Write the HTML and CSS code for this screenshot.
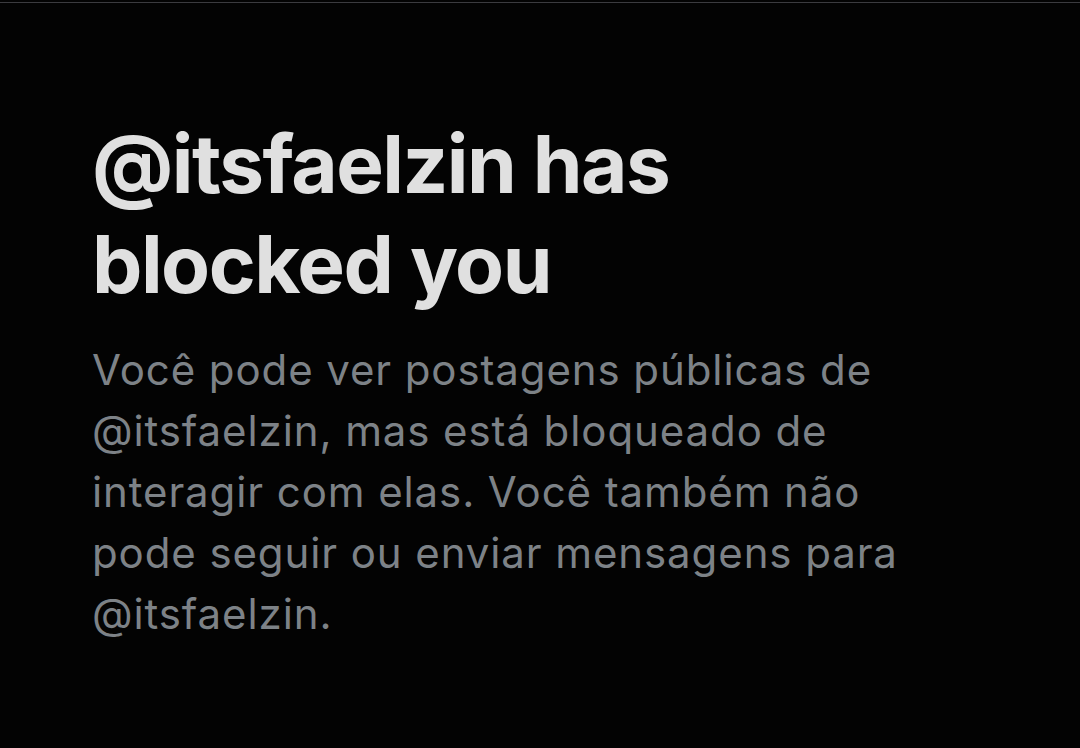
FILE: index.html
```html
<!DOCTYPE html>
<html lang="pt">
<head>
<meta charset="utf-8">
<link rel="stylesheet" href="styles.css">
</head>
<body>
<div class="topline"></div>
<main class="blocked">
  <h1 class="title">@itsfaelzin has blocked you</h1>
  <p class="desc">Você pode ver postagens públicas de @itsfaelzin, mas está bloqueado de interagir com elas. Você também não pode seguir ou enviar mensagens para @itsfaelzin.</p>
</main>
</body>
</html>
```

FILE: styles.css
```css
html, body {
  margin: 0;
  padding: 0;
  background: #030303;
  height: 100%;
}
body {
  font-family: "Inter", "Noto Sans", sans-serif;
  overflow: hidden;
}
.topline {
  height: 1px;
  margin-top: 2px;
  background: #3b3b3f;
}
.blocked {
  padding: 111px 92px 0 92px;
}
.title {
  margin: 0;
  width: 620px;
  font-size: 80px;
  line-height: 100px;
  font-weight: 700;
  letter-spacing: -1.5px;
  color: #e0e0e0;
}
.desc {
  margin: 25px 0 0 0;
  width: 830px;
  font-size: 42px;
  line-height: 61px;
  font-weight: 400;
  letter-spacing: 0.9px;
  color: #7d8287;
}
```
